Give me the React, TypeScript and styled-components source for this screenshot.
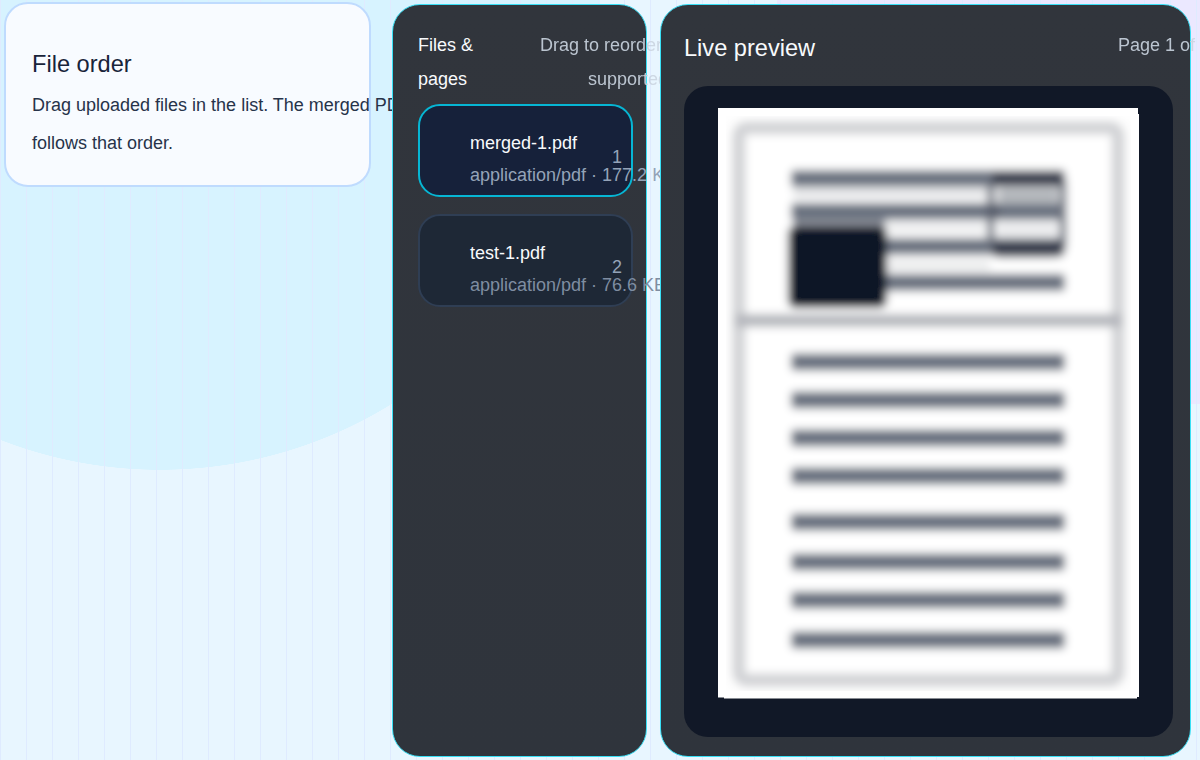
import React from "react";
import styled, { createGlobalStyle } from "styled-components";

const Global = createGlobalStyle`
  html, body { margin: 0; padding: 0; height: 100%; overflow: hidden; }
  body {
    font-family: "Liberation Sans", Arial, sans-serif;
    background-color: #e8f6ff;
    background-image:
      repeating-linear-gradient(90deg, #dfebff 0 1px, transparent 1px 26px),
      radial-gradient(circle 441px at 160px 29px, #d7f3ff 99.9%, transparent 100%),
      radial-gradient(circle 424px at 1200px -20px, #ebe8ff 99.9%, transparent 100%);
  }
`;

const Shell = styled.main`
  box-sizing: border-box;
  width: 1200px;
  height: 760px;
  padding: 2px 9px 3px 4px;
  display: grid;
  grid-template-columns: 367px 255px 531px;
  column-gap: 0;
  overflow: hidden;
`;

const InfoCard = styled.section`
  box-sizing: border-box;
  align-self: start;
  height: 185px;
  padding: 38px 26px 0;
  background: #f8fbff;
  border: 2px solid #bfdbfe;
  border-radius: 24px;
`;

const InfoTitle = styled.h2`
  margin: 0;
  font-size: 23.6px;
  font-weight: 400;
  line-height: 44px;
  color: #18243a;
`;

const InfoText = styled.p`
  margin: 0;
  font-size: 18px;
  line-height: 38px;
  white-space: nowrap;
  color: #27334a;
`;

const Panel = styled.section`
  position: relative;
  box-sizing: border-box;
  margin-top: 2px;
  background: linear-gradient(180deg, #31353c, #2f343c);
  border: 1px solid #38dff5;
  border-radius: 28px;
  display: flex;
  flex-direction: column;
`;

const FilesPanel = styled(Panel)`
  margin-left: 21px;
  margin-right: -21px;
  padding: 23px 13px 0 25px;
`;

const PreviewPanel = styled(Panel)`
  margin-left: 34px;
  margin-right: -34px;
  padding: 21px 17px 19px 23px;
`;

const FilesHeader = styled.header`
  display: flex;
  margin-bottom: 8px;
  font-size: 18px;
  line-height: 34px;
`;

const FilesTitle = styled.h3`
  flex: 0 0 122px;
  box-sizing: border-box;
  margin: 0;
  padding-right: 30px;
  font-size: 18px;
  font-weight: 400;
  color: #f8fafc;
`;

const FilesNote = styled.span`
  flex: 0 0 128px;
  white-space: nowrap;
  color: #cbd5e1;
  opacity: 0.9;
`;

const FilesNoteTail = styled.span`
  display: block;
  padding-left: 48px;
`;

const FileList = styled.ul`
  list-style: none;
  margin: 0;
  padding: 0;
  display: flex;
  flex-direction: column;
  gap: 17px;
`;

const FileRow = styled.li<{ $active?: boolean }>`
  box-sizing: border-box;
  height: 93px;
  padding: 21px 9px 0 50px;
  display: flex;
  border-radius: 22px;
  border: 2px solid ${(p) => (p.$active ? "#06b6d4" : "#2f3e54")};
  background: ${(p) => (p.$active ? "#16213a" : "#1e2836")};
`;

const FileInfo = styled.div`
  flex: 1;
  min-width: 0;
  white-space: nowrap;
  font-size: 18px;
  line-height: 32px;
`;

const FileName = styled.div`
  color: #f8fafc;
`;

const FileMeta = styled.div<{ $active?: boolean }>`
  color: ${(p) => (p.$active ? "#94a3b8" : "#7f8da1")};
`;

const FileIndex = styled.span`
  flex: none;
  margin-top: 14px;
  font-size: 18px;
  line-height: 32px;
  color: #94a3b8;
`;

const PreviewHeader = styled.header`
  display: flex;
  align-items: flex-start;
  margin-bottom: 16px;
`;

const PreviewTitle = styled.h2`
  flex: 1;
  margin: 0;
  font-size: 23.6px;
  font-weight: 400;
  line-height: 44px;
  color: #f8fafc;
`;

const PageCount = styled.span`
  flex: 0 0 55px;
  min-width: 0;
  font-size: 18px;
  line-height: 38px;
  white-space: nowrap;
  color: #cbd5e1;
  opacity: 0.9;
`;

const Stage = styled.div`
  flex: 1;
  min-height: 0;
  padding: 22px 0 0 34px;
  display: flex;
  align-items: flex-start;
  background: #111827;
  border-radius: 24px;
`;

const PageSheet = styled.svg`
  display: block;
  flex: none;
`;

const bodyLines = [362, 400, 438, 476, 522, 562, 600, 640];

const BlurredPage = () => (
  <PageSheet width={422} height={591} viewBox="718 108 422 591" aria-hidden="true">
    <defs>
      <filter id="soft" x="-10%" y="-10%" width="120%" height="120%">
        <feGaussianBlur stdDeviation="4" />
      </filter>
      <clipPath id="scan">
        <rect x="726" y="116" width="405" height="575" />
      </clipPath>
    </defs>
    <polygon
      points="718,108 1138,108 1138,114 1139,114 1139,697 1137,697 1137,698.5 724,698.5 724,697.5 718,697.5"
      fill="#ffffff"
    />
    <g clipPath="url(#scan)">
      <g filter="url(#soft)">
        <rect x="726" y="116" width="405" height="575" fill="#fdfdfd" />
        <rect x="739" y="128" width="379" height="552" rx="8" fill="#ffffff" stroke="#d2d3d6" strokeWidth="13" />
        <rect x="735" y="314" width="387" height="13" fill="#b6b8bd" />

        <rect x="793" y="188" width="198" height="10" fill="#e4e5e7" />
        <rect x="880" y="222" width="110" height="11" fill="#eeeff0" />
        <rect x="880" y="260" width="110" height="11" fill="#ecedee" />
        <rect x="793" y="214" width="92" height="18" fill="#8f939b" />

        <rect x="791" y="170" width="274" height="17" rx="4" fill="#6b7280" />
        <rect x="791" y="203" width="274" height="17" rx="4" fill="#6b7280" />
        <rect x="880" y="238" width="185" height="17" rx="4" fill="#6b7280" />
        <rect x="791" y="274" width="274" height="17" rx="4" fill="#6b7280" />

        <rect x="998" y="188" width="60" height="16" fill="#b4b7bc" />
        <rect x="998" y="221" width="60" height="16" fill="#ebecee" />
        <rect x="991" y="174" width="72" height="80" rx="10" fill="none" stroke="#6f7480" strokeWidth="7" />
        <rect x="992" y="171" width="72" height="15" rx="4" fill="#3a4150" />
        <rect x="992" y="241" width="72" height="16" rx="5" fill="#3a4150" />
        <rect x="987" y="205" width="12" height="12" fill="#565c6a" />

        <rect x="788" y="226" width="99" height="82" rx="8" fill="#0f1626" />

        {bodyLines.map((y) => (
          <rect key={y} x="791" y={y - 8.5} width="274" height="17" rx="4" fill="#6b7280" />
        ))}
      </g>
    </g>
  </PageSheet>
);

export default function App() {
  return (
    <Shell>
      <Global />
      <InfoCard>
        <InfoTitle>File order</InfoTitle>
        <InfoText>
          Drag uploaded files in the list. The merged PDF
          <br />
          follows that order.
        </InfoText>
      </InfoCard>
      <FilesPanel>
        <FilesHeader>
          <FilesTitle>Files &amp; pages</FilesTitle>
          <FilesNote>
            Drag to reorder
            <FilesNoteTail>supported</FilesNoteTail>
          </FilesNote>
        </FilesHeader>
        <FileList>
          <FileRow $active>
            <FileInfo>
              <FileName>merged-1.pdf</FileName>
              <FileMeta $active>application/pdf · 177.2 KB</FileMeta>
            </FileInfo>
            <FileIndex>1</FileIndex>
          </FileRow>
          <FileRow>
            <FileInfo>
              <FileName>test-1.pdf</FileName>
              <FileMeta>application/pdf · 76.6 KB</FileMeta>
            </FileInfo>
            <FileIndex>2</FileIndex>
          </FileRow>
        </FileList>
      </FilesPanel>
      <PreviewPanel>
        <PreviewHeader>
          <PreviewTitle>Live preview</PreviewTitle>
          <PageCount>Page 1 of</PageCount>
        </PreviewHeader>
        <Stage>
          <BlurredPage />
        </Stage>
      </PreviewPanel>
    </Shell>
  );
}
